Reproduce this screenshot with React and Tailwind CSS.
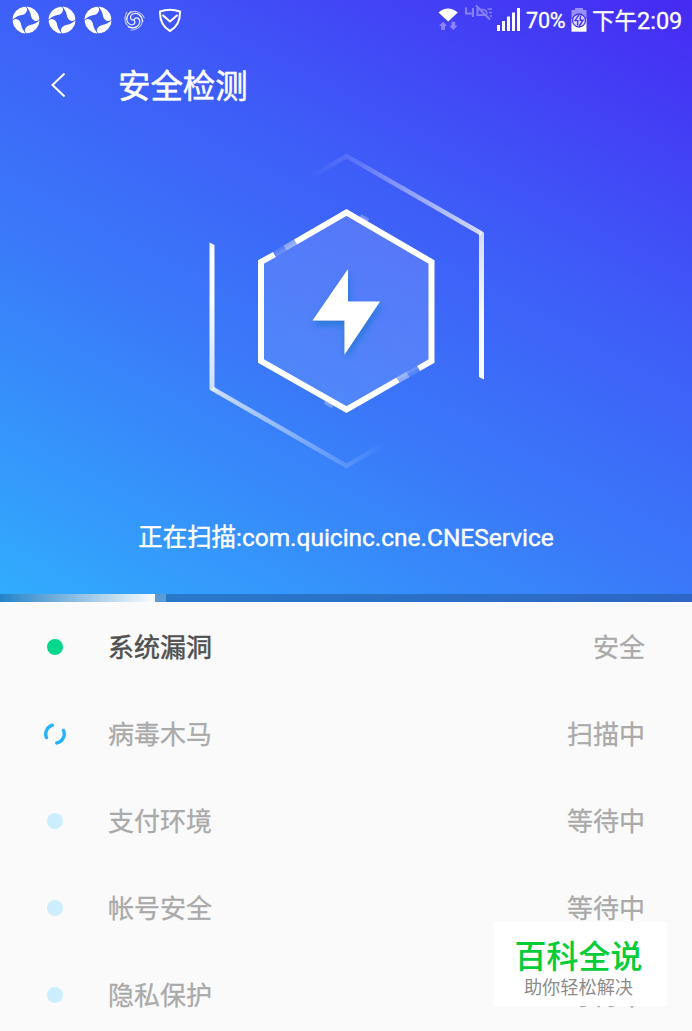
import React from "react";

const CJK = "font-['Roboto','Noto_Sans_CJK_SC',sans-serif]";

const blade = "M0.500 -13.600 A13.6 13.6 0 0 1 13.300 -2 C13.700 0.900 10.400 2 7.800 0.200 C4.200 -2.400 5.400 -5.600 3.400 -9 C2.600 -10.600 1.500 -12 0.500 -13.600Z";

function SwirlIcon() {
  return (
    <svg className="h-7 w-7 shrink-0" viewBox="-14 -14 28 28" fill="#fff">
      {[0, 90, 180, 270].map((a) => (
        <path key={a} d={blade} transform={`rotate(${a})`} />
      ))}
    </svg>
  );
}

function SpiralIcon() {
  return (
    <svg className="ml-[10px] h-6 w-6 shrink-0" viewBox="-9.500 -9.500 19 19" fill="none" stroke="#fff" strokeWidth="0.9" strokeLinecap="round">
      {[0, 120, 240].map((a) => (
        <g key={a} transform={`rotate(${a})`}>
          <path d="M0 -0.300 C1.500 -3 5 -1.500 4.500 2 C3.800 6 -0.500 7 -4.500 5.500" strokeOpacity="0.9" />
          <path d="M3.300 -4.500 C7 -3 7.500 2.500 4.500 5.300 C2.500 7.200 0 8 -2.500 7.900" strokeOpacity="0.65" />
        </g>
      ))}
    </svg>
  );
}

function StatusBar() {
  return (
    <div className="flex h-10 items-center pl-3 pr-[10px] text-white">
      <div className="flex items-center gap-2">
        <SwirlIcon />
        <SwirlIcon />
        <SwirlIcon />
      </div>
      <SpiralIcon />
      <svg className="ml-3 h-6 w-6 shrink-0" viewBox="0 0 24 24" fill="none" stroke="#fff" strokeWidth="2" strokeLinejoin="round">
        <path d="M2 3.500 Q12 -0.200 22 3.500 C22.300 13 19.500 19 12 23 C4.500 19 1.700 13 2 3.500Z" />
        <path d="M4.500 7 L12 13.500 L19.500 7" />
      </svg>
      <div className="ml-auto flex h-10 items-center">
        <svg className="h-10 w-[86px]" viewBox="0 0 86 40">
          <path d="M1.500 12.500 Q11 4.500 20.800 12.500 L11.200 21.500Z" fill="#fff" />
          <g fill="#8c83fb">
            <path d="M2 26 L6 21.800 L10 26 H8 V30 H4.200 V26Z" />
            <path d="M12.300 25.800 H14.500 V21.800 H18.200 V25.800 H20.400 L16.300 30Z" />
          </g>
          <g fill="none" stroke="#8880fb" strokeWidth="2">
            <path d="M29 7.500 V13.500 H36.500 M36 8 V17 M40.500 8 V15 H50 M39 5.500 L53 19.500" />
            <path d="M42 9.500 H46 Q50 10 50 14 M50.500 9 H55 M52 12.500 H55 M53 16 H55" strokeWidth="1.500" />
          </g>
          <g fill="#fff">
            <rect x="60" y="25" width="3" height="6" />
            <rect x="65" y="21" width="3" height="10" />
            <rect x="70" y="16.500" width="3" height="14.500" />
            <rect x="75" y="12.500" width="3" height="18.500" />
            <rect x="80" y="8" width="3" height="23" />
          </g>
        </svg>
        <span className="ml-[3px] w-[39px] whitespace-nowrap pt-[2px] text-[21.600px] tracking-[-0.2px] [-webkit-text-stroke:0.3px_#fff]">70%</span>
        <svg className="ml-[6px] h-6 w-4 shrink-0" viewBox="0 0 16 24">
          <path d="M4 0 H12 V2 H15.500 V12 H0.500 V2 H4Z" fill="#978ffc" />
          <rect x="0.500" y="11" width="15" height="12.700" fill="#fff" />
          <circle cx="8" cy="12.500" r="6.500" fill="#d9d6ff" stroke="#4732f3" strokeWidth="1.300" />
          <path d="M8 6.800 L4 12.600 H6.800 L6.500 17.500 M9.500 7.500 L9.200 12.200 H12 L8 18.500" fill="none" stroke="#4732f3" strokeWidth="1.400" />
        </svg>
        <span className="ml-[5px] flex w-[90px] items-center whitespace-nowrap leading-10 [-webkit-text-stroke:0.3px_#fff]">
          <span className="pt-px text-[22.500px]">下午</span>
          <span className="pt-px text-[23.500px]">2:09</span>
        </span>
      </div>
    </div>
  );
}

function Radar() {
  return (
    <svg className="mx-auto h-[336px] w-[292px] shrink-0" viewBox="200 144 292 336" fill="none">
      <defs>
        <linearGradient id="outerRight" gradientUnits="userSpaceOnUse" x1="310" y1="0" x2="483" y2="0">
          <stop offset="0" stopColor="#fff" stopOpacity="0" />
          <stop offset="0.25" stopColor="#fff" stopOpacity="0.14" />
          <stop offset="0.96" stopColor="#fff" stopOpacity="0.75" />
          <stop offset="1" stopColor="#fff" stopOpacity="0.85" />
        </linearGradient>
        <linearGradient id="outerLeft" gradientUnits="userSpaceOnUse" x1="212" y1="0" x2="385" y2="0">
          <stop offset="0" stopColor="#fff" stopOpacity="0.85" />
          <stop offset="0.04" stopColor="#fff" stopOpacity="0.72" />
          <stop offset="0.76" stopColor="#fff" stopOpacity="0.16" />
          <stop offset="1" stopColor="#fff" stopOpacity="0" />
        </linearGradient>
        <linearGradient id="sideRight" gradientUnits="userSpaceOnUse" x1="0" y1="232" x2="0" y2="320">
          <stop offset="0" stopColor="#fff" stopOpacity="0.78" />
          <stop offset="1" stopColor="#fff" stopOpacity="0.97" />
        </linearGradient>
        <linearGradient id="sideLeft" gradientUnits="userSpaceOnUse" x1="0" y1="300" x2="0" y2="390">
          <stop offset="0" stopColor="#fff" stopOpacity="0.97" />
          <stop offset="1" stopColor="#fff" stopOpacity="0.75" />
        </linearGradient>
        <linearGradient id="hexFill" x1="0" y1="1" x2="1" y2="0">
          <stop offset="0" stopColor="#fff" stopOpacity="0.1" />
          <stop offset="1" stopColor="#fff" stopOpacity="0.14" />
        </linearGradient>
        <filter id="boltShadow" x="-40%" y="-40%" width="180%" height="180%">
          <feDropShadow dx="1" dy="4" stdDeviation="3.500" floodColor="#0874c8" floodOpacity="0.75" />
        </filter>
      </defs>
      <path d="M310 177.500 L346.500 156 L481.500 233.500" stroke="url(#outerRight)" strokeWidth="4.500" />
      <path d="M479 234.500 L481.500 231.500 L484 232.500 V379.500 L479 377Z" fill="url(#sideRight)" />
      <path d="M209.500 242.500 L214.500 245 V387.500 L211.500 391 L209.500 389.500Z" fill="url(#sideLeft)" />
      <path d="M212.500 388.800 L346.500 466 L385 443.500" stroke="url(#outerLeft)" strokeWidth="4.500" />
      <path d="M346.500 212.500 L431.500 262 V361 L346.500 409.500 L261 361 V262Z" fill="url(#hexFill)" />
      <g stroke="#fff" strokeWidth="6">
        <path d="M295.500 242 L346.500 212.500 L431.500 262 V361 L418.500 368.500" />
        <path d="M398 380 L346.500 409.500 L261 361 V262 L274.500 254.500" />
        <path d="M295.500 242 L285 248 M398 380 L408 374.500" strokeOpacity="0.42" />
        <path d="M285 248 L275 254 M408 374.500 L418 369" strokeOpacity="0.14" />
        <path d="M360 216.500 L368 221 M325 401.500 L333 406" strokeWidth="5" strokeOpacity="0.28" />
      </g>
      <path d="M348 269 V301.500 H380 L344.500 354.500 V320.500 H312.500Z" fill="#fff" filter="url(#boltShadow)" />
    </svg>
  );
}

function Marker({ state }) {
  if (state === "done") return <span className="block h-4 w-4 rounded-full bg-[#05d78d]" />;
  if (state === "waiting") return <span className="block h-4 w-4 rounded-full bg-[#cceeff]" />;
  return (
    <svg className="h-6 w-6" viewBox="-12 -12 24 24" fill="none" stroke="#27b3fa" strokeWidth="3.400" strokeLinecap="round">
      <path d="M-8.500 3.600 A9.200 9.200 0 0 1 -2.700 -8.800 M8.500 -3.600 A9.200 9.200 0 0 1 1.800 9" />
    </svg>
  );
}

const items = [
  { name: "系统漏洞", status: "安全", state: "done" },
  { name: "病毒木马", status: "扫描中", state: "scanning" },
  { name: "支付环境", status: "等待中", state: "waiting" },
  { name: "帐号安全", status: "等待中", state: "waiting" },
  { name: "隐私保护", status: "等待中", state: "waiting" },
];

export default function App() {
  return (
    <div className={`relative flex h-[1031px] w-[692px] flex-col overflow-hidden bg-[#fafafa] ${CJK}`}>
      <section className="flex h-[594px] shrink-0 flex-col bg-[linear-gradient(28deg,#31acfd_0%,#3a79f9_38%,#3e5df8_64%,#462af3_100%)] text-white">
        <StatusBar />
        <header className="flex h-[90px] items-center pl-[50px]">
          <svg className="h-6 w-4 shrink-0" viewBox="0 0 16 24" fill="none" stroke="#fff" strokeWidth="2">
            <path d="M14.500 0.500 L2.500 12 L14.500 23.500" />
          </svg>
          <h1 className="ml-[52px] pt-[4px] text-[32.400px] font-normal leading-none [-webkit-text-stroke:0.5px_#fff]">安全检测</h1>
        </header>
        <div className="flex pt-[14px]">
          <Radar />
        </div>
        <p className="mt-[38px] whitespace-nowrap text-center text-[24.450px] leading-[40px] [-webkit-text-stroke:0.4px_#fff]">
          正在扫描:com.quicinc.cne.CNEService
        </p>
      </section>
      <div className="flex h-2 shrink-0 bg-[linear-gradient(to_right,#277fca,#2d66c6)]">
        <div className="h-full w-[155px] bg-[linear-gradient(to_right,#2482c8,#fafcfe)]" />
        <div className="h-full w-[11px] bg-[#5b9bd6]" />
      </div>
      <ul className="pt-[2px]">
        {items.map((item) => (
          <li key={item.name} className="flex h-[87px] items-center pl-[31px] pr-[47px] text-[26px]">
            <span className="flex w-12 items-center justify-center pb-[2px]">
              <Marker state={item.state} />
            </span>
            <span
              className={
                item.state === "done"
                  ? "ml-[29px] pt-[2px] text-[#505050] [-webkit-text-stroke:0.5px_#505050]"
                  : "ml-[29px] pt-[2px] text-[#aaaaaa] [-webkit-text-stroke:0.3px_#aaaaaa]"
              }
            >
              {item.name}
            </span>
            <span className="ml-auto pt-[2px] text-[#aaaaaa] [-webkit-text-stroke:0.3px_#aaaaaa]">{item.status}</span>
          </li>
        ))}
      </ul>
      <aside className="absolute left-[494px] top-[922px] flex h-[84px] w-[173px] flex-col items-center bg-white">
        <strong className="mt-[17px] pr-[4px] text-[32px] font-medium leading-[36px] text-[#05cd38]">百科全说</strong>
        <span className="mt-[3px] pr-[4px] text-[18.200px] leading-[20px] text-[#8c8c8c]">助你轻松解决</span>
      </aside>
    </div>
  );
}
